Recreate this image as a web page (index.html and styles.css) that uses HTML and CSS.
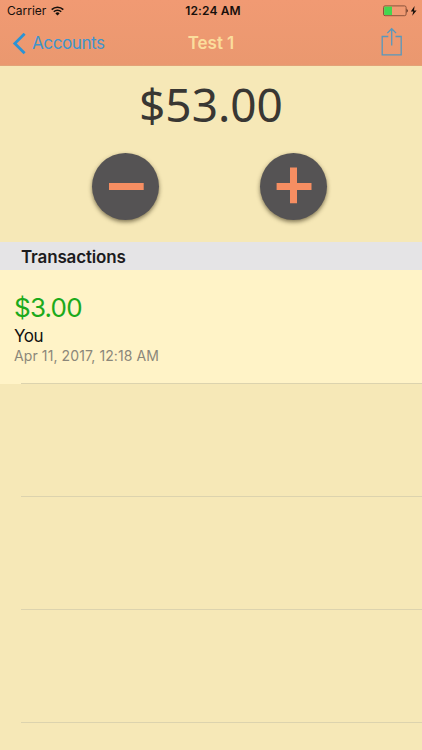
FILE: index.html
```html
<!DOCTYPE html>
<html lang="en">
<head>
<meta charset="utf-8">
<title>Test 1</title>
<link rel="stylesheet" href="styles.css">
</head>
<body>
<header class="top">
  <div class="status">
    <div class="carrier"><span class="carrier-name">Carrier</span>
      <svg class="wifi" width="13" height="10" viewBox="0 0 13 10" fill="none" stroke="#17100c" stroke-width="1.6"><path d="M.7 3.6a8.2 8.2 0 0 1 11.6 0M2.8 5.8a5.2 5.2 0 0 1 7.4 0"/><path d="M4.4 7.4a3 3 0 0 1 4.2 0L6.5 9.6z" fill="#17100c" stroke="none"/></svg>
    </div>
    <span class="clock">12:24 AM</span>
    <svg class="battery" width="36" height="12" viewBox="0 0 36 12"><rect x=".5" y=".9" width="22.6" height="9.8" rx="1.6" fill="none" stroke="#814c35" stroke-width=".9"/><path d="M1.2 1.6h7.8v8.4H1.2z" fill="#43d64f"/><path d="M23.6 3.8q2.4 2 0 4z" fill="#4b291d"/><path d="M31.6 1.1 27.8 6.4h2.5l-1.1 4.4 4.4-5.4h-2.6z" fill="#17100c"/></svg>
  </div>
  <nav class="nav">
    <div class="back">
      <svg width="14" height="22" viewBox="0 0 14 22" fill="none" stroke="#2b93d5" stroke-width="2.8"><path d="M12.6 .7 2.8 10.5l9.8 9.8"/></svg>
      <span class="back-label">Accounts</span>
    </div>
    <h1 class="title">Test 1</h1>
    <svg class="share" width="22" height="30" viewBox="0 0 22 30" fill="none" stroke="#5798bd" stroke-width="1.3"><path d="M7.3 9.5H1.2v18.3h19V9.5h-5.7M10.7 18.5V1.7M6.3 6.1l4.4-4.4 4.4 4.4"/></svg>
  </nav>
</header>
<section class="summary">
  <div class="amount">$53.00</div>
  <div class="actions">
    <div class="round"><svg width="67" height="67" viewBox="0 0 67 67"><path d="M17 30h34.7v7H17z" fill="#f68e62"/></svg></div>
    <div class="round"><svg width="67" height="67" viewBox="0 0 67 67"><path d="M30 14.6h7V30h14.5v7H37v13.2h-7V37H16.6v-7H30z" fill="#f68e62"/></svg></div>
  </div>
</section>
<h2 class="section"><span class="section-label">Transactions</span></h2>
<ul class="list">
  <li class="row filled">
    <div class="value"><span class="value-text">$3.00</span></div>
    <div class="who"><span>You</span></div>
    <div class="date"><span class="date-text">Apr 11, 2017, 12:18 AM</span></div>
  </li>
  <li class="row"></li>
  <li class="row"></li>
  <li class="row"></li>
</ul>
</body>
</html>
```
FILE: styles.css
```css
* { box-sizing: border-box; }
body {
  margin: 0;
  height: 750px;
  overflow: hidden;
  background: #f6e8b7;
  color: #111;
  font-family: Inter, "Liberation Sans", sans-serif;
}
.top {
  height: 66px;
  background: linear-gradient(#f19a73, #ea986f);
  border-bottom: 1px solid #e3a277;
}
.status {
  height: 22px;
  display: grid;
  grid-template-columns: 1fr auto 1fr;
  align-items: center;
  padding: 0 3px 0 7px;
  font-size: 12px;
  line-height: 22px;
  color: #17100c;
}
.carrier { display: flex; align-items: center; gap: 5px; }
.clock { font-weight: 600; letter-spacing: .15px; }
.battery { justify-self: end; }
.nav {
  height: 43px;
  display: grid;
  grid-template-columns: 1fr auto 1fr;
  align-items: center;
  padding: 0 19px 0 12px;
  font-size: 17px;
}
.back { display: flex; align-items: center; gap: 6px; color: #3f94cc; }
.back-label { letter-spacing: -.4px; margin-top: -1px; }
.title { margin: -1px -7px 0 0; font-size: 17px; font-weight: 600; color: #fbdd9c; letter-spacing: -.05px; }
.share { justify-self: end; margin-top: -4px; }
.summary { height: 176px; padding-top: 13px; }
.amount {
  height: 50px;
  line-height: 50px;
  text-align: center;
  font-family: "Noto Sans", sans-serif;
  font-size: 46px;
  color: #393733;
}
.actions { display: flex; gap: 101px; padding: 24px 0 0 92px; }
.round {
  width: 67px;
  height: 67px;
  border-radius: 50%;
  background: #555354;
  box-shadow: 0 2px 4px rgba(65, 55, 30, .65);
}
.round svg { display: block; }
.section {
  margin: 0;
  height: 28px;
  padding: 1px 0 0 21px;
  line-height: 28px;
  font-size: 17px;
  font-weight: 600;
  background: #e5e4e6;
  color: #1c1b1d;
}
.section-label { letter-spacing: -.15px; }
.list { list-style: none; margin: 0; padding: 0; }
.row {
  height: 113px;
  padding: 21px 14px 0;
  background: linear-gradient(#dcd3ae, #dcd3ae) 21px 100% / 100% 1px no-repeat;
}
.row.filled { background-color: #fff3c7; height: 114px; }
.value { height: 34px; line-height: 33px; font-size: 26px; letter-spacing: -.8px; color: #1caa1b; }
.who { height: 22px; line-height: 22px; font-size: 17px; letter-spacing: -.5px; }
.date { height: 18px; line-height: 18px; font-size: 14px; letter-spacing: .1px; color: #8b877a; }
```
